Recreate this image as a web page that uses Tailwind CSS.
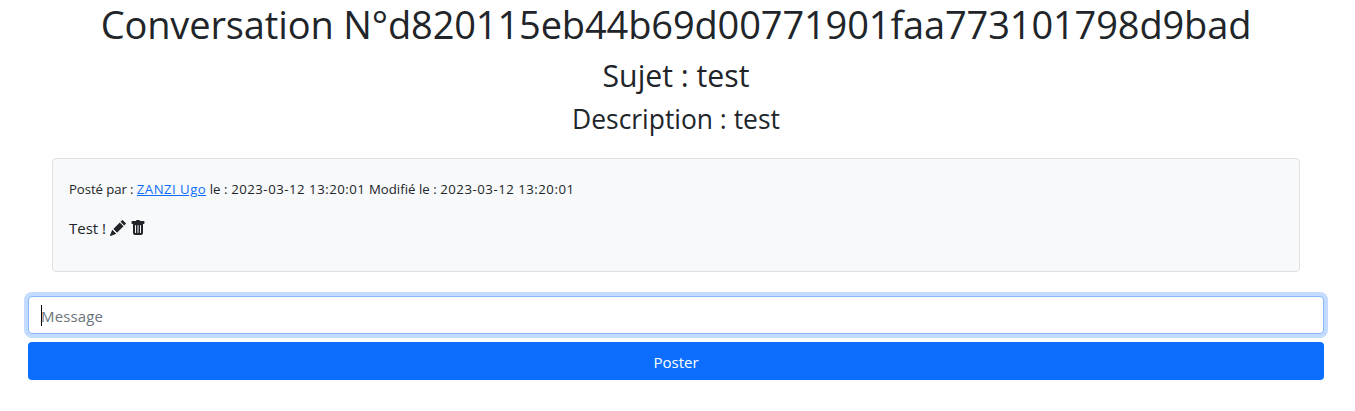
<!DOCTYPE html>
<html lang="fr">
<head>
<meta charset="utf-8">
<title>Conversation</title>
<script src="https://cdn.jsdelivr.net/npm/@tailwindcss/browser@4"></script>
</head>
<body class="bg-white text-[#212529] font-['Open_Sans','Noto_Sans',sans-serif] overflow-hidden">
<header class="flex flex-col items-center gap-2 pr-[3px]">
  <h1 class="text-[38px] leading-[48px] tracking-[-0.13px] whitespace-nowrap">Conversation N°d820115eb44b69d00771901faa773101798d9bad</h1>
  <h2 class="pt-px text-[30.2px] leading-[38.4px]">Sujet : test</h2>
  <h3 class="text-[26.4px] leading-[33.6px]">Description : test</h3>
</header>
<main class="px-7 pt-[21px] mr-[3px]">
  <article class="mx-6 h-[114px] rounded border border-[#dfe0e1] bg-[#f8f9fa] px-4 pt-5">
    <p class="text-[13.2px] leading-[21px] whitespace-nowrap"><span class="tracking-[-0.08px]">Posté par : </span><a href="#" class="text-[#0d6efd] underline tracking-[0.46px]">ZANZI Ugo</a><span class="tracking-[0.08px]"> le : </span><span class="tracking-[0.52px]">2023-03-12 13:20:01</span><span class="tracking-[0.04px]"> Modifié le : </span><span class="tracking-[0.52px]">2023-03-12 13:20:01</span></p>
    <div class="mt-4 flex h-6 items-center text-[15px] leading-6">
      <span class="mr-[3.6px] tracking-[-0.02px]">Test !</span>
      <svg class="mr-1 size-4" viewBox="0 0 16 16" fill="currentColor"><path d="M12.854.146a.5.5 0 0 0-.707 0L10.5 1.793 14.207 5.5l1.647-1.646a.5.5 0 0 0 0-.708l-3-3zm.646 6.061L9.793 2.5 3.293 9H3.5a.5.5 0 0 1 .5.5v.5h.5a.5.5 0 0 1 .5.5v.5h.5a.5.5 0 0 1 .5.5v.5h.5a.5.5 0 0 1 .5.5v.207l6.5-6.5zm-7.468 7.468A.5.5 0 0 1 6 13.5V13h-.5a.5.5 0 0 1-.5-.5V12h-.5a.5.5 0 0 1-.5-.5V11h-.5a.5.5 0 0 1-.5-.5V10h-.5a.499.499 0 0 1-.175-.032l-.179.178a.5.5 0 0 0-.11.168l-2 5a.5.5 0 0 0 .65.65l5-2a.5.5 0 0 0 .168-.11l.178-.178z"/></svg>
      <svg class="size-4" viewBox="0 0 16 16" fill="currentColor"><path d="M2.5 1a1 1 0 0 0-1 1v1a1 1 0 0 0 1 1H3v9a2 2 0 0 0 2 2h6a2 2 0 0 0 2-2V4h.5a1 1 0 0 0 1-1V2a1 1 0 0 0-1-1H10a1 1 0 0 0-1-1H7a1 1 0 0 0-1 1H2.5zm3 4a.5.5 0 0 1 .5.5v7a.5.5 0 0 1-1 0v-7a.5.5 0 0 1 .5-.5zM8 5a.5.5 0 0 1 .5.5v7a.5.5 0 0 1-1 0v-7A.5.5 0 0 1 8 5zm3 .5v7a.5.5 0 0 1-1 0v-7a.5.5 0 0 1 1 0z"/></svg>
    </div>
  </article>
  <div class="mt-6 flex h-[38px] items-center rounded border border-[#86b7fe] bg-white pl-3 shadow-[0_0_0_4px_#c2dbfe]">
    <span class="h-[21px] w-px bg-black"></span>
    <span class="-ml-px pt-0.5 text-[15px] leading-6 tracking-[0.15px] text-[#6c757d]">Message</span>
  </div>
  <button class="mt-2 block h-[38px] w-full rounded bg-[#0d6efd] pt-px text-[15px] leading-6 text-white">Poster</button>
</main>
</body>
</html>
